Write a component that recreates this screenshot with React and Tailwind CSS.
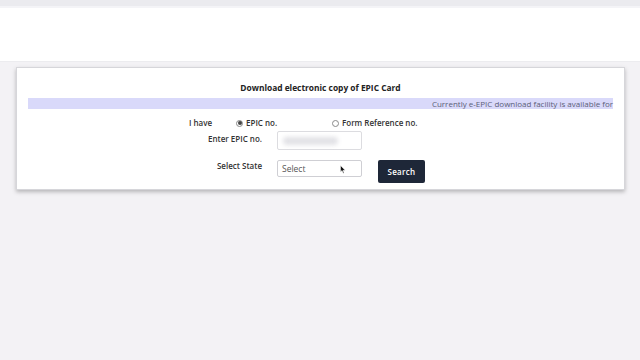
import React from "react";

const font = { fontFamily: '"Open Sans", "Noto Sans", sans-serif' };

const Radio = ({ checked }) => (
  <span className="inline-flex items-center justify-center w-[7px] h-[7px] rounded-full border border-[#8a8a8a] bg-white mr-[3px]">
    {checked && <span className="w-[4px] h-[4px] rounded-full bg-[#444]" />}
  </span>
);

const App = () => {
  return (
    <div className="w-[640px] h-[360px] bg-[#f3f2f5] overflow-hidden text-[#333]" style={font}>
      {/* top strip */}
      <div className="h-[6px] bg-[#ebebef]" />
      <div className="h-[2px] bg-[#f4f4f7]" />
      {/* header */}
      <div className="h-[54px] bg-white border-b border-[#ececef]" />

      {/* card */}
      <div className="mt-[5px] ml-[16px] w-[609px] h-[123px] bg-white border border-[#d6d6da] shadow-[0_2px_4px_rgba(0,0,0,0.25)] px-[11px] pt-[14px]">
        <div className="text-center text-[8.4px] font-bold leading-[12px] text-[#222]">
          Download electronic copy of EPIC Card
        </div>
        <div className="mt-[4px] h-[11px] bg-[#d9d9fa] text-right text-[8px] leading-[11px] text-[#5b6078]">
          Currently e-EPIC download facility is available for
        </div>

        <div className="ml-[161px] mt-[9px] flex flex-col">
          {/* row 1 */}
          <div className="flex items-center h-[10px] text-[8px] font-semibold text-[#333]">
            <span className="w-[47px]">I have</span>
            <span className="w-[96px] flex items-center">
              <Radio checked />
              EPIC no.
            </span>
            <span className="flex items-center">
              <Radio />
              Form Reference no.
            </span>
          </div>

          {/* row 2 */}
          <div className="flex items-start mt-[3px]">
            <div className="w-[73px] text-right text-[8px] font-semibold leading-[10px] pt-[3px] text-[#333]">
              Enter EPIC no.
            </div>
            <div className="ml-[15px] w-[85px] h-[19px] border border-[#dcdce0] rounded-[2px] bg-white flex items-center px-[5px]">
              <div className="w-[55px] h-[8px] bg-[#e2e2e6] blur-[2px] rounded" />
            </div>
          </div>

          {/* row 3 */}
          <div className="flex items-start mt-[10px]">
            <div className="w-[73px] text-right text-[8px] font-semibold leading-[10px] pt-[1px] text-[#333]">
              Select State
            </div>
            <div className="relative ml-[15px] w-[85px] h-[17px] border border-[#cfcfd4] rounded-[2px] bg-white text-[8.5px] leading-[15px] pl-[4px] text-[#555]">
              Select
              <svg className="absolute left-[62px] top-[4px]" width="6" height="9" viewBox="0 0 6 9">
                <path d="M0.5 0.5 L0.5 7 L2 5.6 L3.2 8.3 L4.1 7.9 L3 5.3 L5.2 5.3 Z" fill="#111" stroke="#fff" strokeWidth="0.5" />
              </svg>
            </div>
            <button className="ml-[16px] w-[47px] h-[23px] rounded-[2px] bg-[#1e2738] text-white text-[8px] font-semibold tracking-[0.3px]">
              Search
            </button>
          </div>
        </div>
      </div>
    </div>
  );
};

export default App;
